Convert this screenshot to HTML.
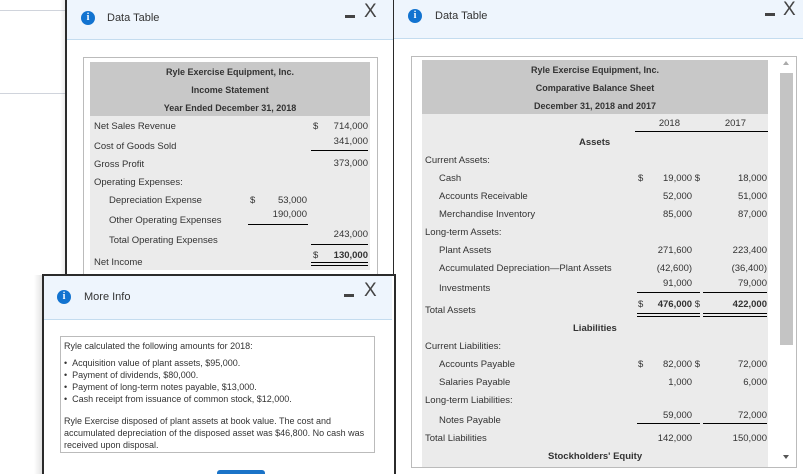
<!DOCTYPE html>
<html style="width:803px;height:474px;overflow:hidden"><head><meta charset="utf-8"><style>
*{margin:0;padding:0;box-sizing:border-box}
body{width:803px;height:474px;overflow:hidden;background:#fff;position:relative;font-family:"Liberation Sans",Arial,sans-serif;color:#333;font-size:9.5px}
.a{position:absolute;white-space:nowrap}
.r{text-align:right}
.b{font-weight:bold}
.ul{position:absolute;height:1px;background:#000}
.dl{position:absolute;height:4px;border-top:1px solid #000;border-bottom:1px solid #000}
.icon{position:absolute;width:14px;height:14px;border-radius:50%;background:#1273d0;color:#fff;font:bold 10px "Liberation Serif",serif;text-align:center;line-height:14px}
.hdr{position:absolute;background:#eef5fd;border-bottom:1px solid #c4dcef}
.ttl{position:absolute;font-size:11px;color:#333}
.min{position:absolute;width:10px;height:3px;background:#444}
.x{position:absolute;font-size:19px;color:#444;font-family:"Liberation Sans",sans-serif;line-height:1}
</style></head><body>
<div class="a" style="left:0;top:10px;width:70px;height:1px;background:#d0d4dc"></div>
<div class="a" style="left:0;top:93px;width:70px;height:1px;background:#d0d4dc"></div>

<!-- Window 1 -->
<div class="a" style="left:60px;top:0;width:8px;height:276px;background:linear-gradient(to right,rgba(0,0,0,0),rgba(0,0,0,0.12))"></div>
<div class="a" style="left:65px;top:-2px;width:330px;height:278px;background:#fff;border:2px solid #2b2b2b"></div>
<div class="hdr" style="left:67px;top:0;width:326px;height:40px"></div>
<div class="icon" style="left:81px;top:11px">i</div>
<div class="ttl" style="left:107px;top:12px">Data Table</div>
<div class="min" style="left:345px;top:15px"></div>
<div class="x" style="left:364px;top:2px">X</div>
<div class="a" style="left:83px;top:57px;width:295px;height:220px;border:1px solid #bbb"></div>
<div class="a" style="left:90px;top:62px;width:280px;height:54px;background:#c8c8c8"></div>
<div class="a" style="left:90px;top:116px;width:280px;height:154px;background:#ebebeb"></div>
<div class="a b" style="left:90px;width:280px;top:67px;text-align:center;font-size:9px">Ryle Exercise Equipment, Inc.</div>
<div class="a b" style="left:90px;width:280px;top:85px;text-align:center;font-size:9px">Income Statement</div>
<div class="a b" style="left:90px;width:280px;top:103px;text-align:center;font-size:9px">Year Ended December 31, 2018</div>
<div class="a" style="left:94px;top:121px">Net Sales Revenue</div>
<div class="a" style="left:94px;top:141px">Cost of Goods Sold</div>
<div class="a" style="left:94px;top:159px">Gross Profit</div>
<div class="a" style="left:94px;top:177px">Operating Expenses:</div>
<div class="a" style="left:109px;top:195px">Depreciation Expense</div>
<div class="a" style="left:109px;top:215px">Other Operating Expenses</div>
<div class="a" style="left:109px;top:235px">Total Operating Expenses</div>
<div class="a" style="left:94px;top:257px">Net Income</div>
<div class="a" style="left:313px;top:121px">$</div>
<div class="a r" style="left:310px;width:58px;top:121px">714,000</div>
<div class="a r" style="left:310px;width:58px;top:136px">341,000</div>
<div class="ul" style="left:311px;width:57px;top:150px"></div>
<div class="a r" style="left:310px;width:58px;top:158px">373,000</div>
<div class="a" style="left:250px;top:195px">$</div>
<div class="a r" style="left:250px;width:57px;top:195px">53,000</div>
<div class="a r" style="left:250px;width:57px;top:209px">190,000</div>
<div class="ul" style="left:248px;width:60px;top:224px"></div>
<div class="a r" style="left:310px;width:58px;top:229px">243,000</div>
<div class="ul" style="left:311px;width:57px;top:244px"></div>
<div class="a" style="left:313px;top:250px">$</div>
<div class="a r b" style="left:310px;width:58px;top:250px">130,000</div>
<div class="dl" style="left:311px;width:57px;top:262px"></div>

<!-- Window 2 -->
<div class="a" style="left:392px;top:0;width:8px;height:474px;background:linear-gradient(to right,rgba(0,0,0,0),rgba(0,0,0,0.1))"></div>
<div class="a" style="left:394px;top:0;width:409px;height:474px;background:#fff"></div>
<div class="hdr" style="left:394px;top:0;width:409px;height:39px"></div>
<div class="icon" style="left:408px;top:9px">i</div>
<div class="ttl" style="left:435px;top:10px">Data Table</div>
<div class="min" style="left:765px;top:13px"></div>
<div class="x" style="left:783px;top:0">X</div>
<div class="a" style="left:411px;top:56px;width:386px;height:412px;border:1px solid #bbb"></div>
<div class="a" style="left:422px;top:60px;width:346px;height:54px;background:#c8c8c8"></div>
<div class="a" style="left:422px;top:114px;width:346px;height:353px;background:#ebebeb"></div>
<div class="a" style="left:780px;top:73px;width:13px;height:272px;background:#c4c4c4"></div>
<div class="a" style="left:783px;top:61px;width:0;height:0;border-left:3.5px solid transparent;border-right:3.5px solid transparent;border-bottom:4px solid #aaa"></div>
<div class="a" style="left:783px;top:455px;width:0;height:0;border-left:3.5px solid transparent;border-right:3.5px solid transparent;border-top:4px solid #555"></div>
<div class="a b" style="left:422px;width:346px;top:65px;text-align:center;font-size:9px">Ryle Exercise Equipment, Inc.</div>
<div class="a b" style="left:422px;width:346px;top:83px;text-align:center;font-size:9px">Comparative Balance Sheet</div>
<div class="a b" style="left:422px;width:346px;top:101px;text-align:center;font-size:9px">December 31, 2018 and 2017</div>
<div class="a r" style="left:640px;width:40px;top:118px">2018</div>
<div class="a r" style="left:706px;width:40px;top:118px">2017</div>
<div class="ul" style="left:635px;width:133px;top:131px"></div>
<div class="a b" style="left:579px;top:137px">Assets</div>
<div class="a" style="left:425px;top:155px">Current Assets:</div>
<div class="a" style="left:439px;top:173px">Cash</div>
<div class="a" style="left:439px;top:191px">Accounts Receivable</div>
<div class="a" style="left:439px;top:209px">Merchandise Inventory</div>
<div class="a" style="left:425px;top:227px">Long-term Assets:</div>
<div class="a" style="left:439px;top:245px">Plant Assets</div>
<div class="a" style="left:439px;top:263px">Accumulated Depreciation—Plant Assets</div>
<div class="a" style="left:439px;top:283px">Investments</div>
<div class="a" style="left:425px;top:305px">Total Assets</div>
<div class="a b" style="left:573px;top:323px">Liabilities</div>
<div class="a" style="left:425px;top:341px">Current Liabilities:</div>
<div class="a" style="left:439px;top:359px">Accounts Payable</div>
<div class="a" style="left:439px;top:377px">Salaries Payable</div>
<div class="a" style="left:425px;top:395px">Long-term Liabilities:</div>
<div class="a" style="left:439px;top:415px">Notes Payable</div>
<div class="a" style="left:425px;top:433px">Total Liabilities</div>
<div class="a b" style="left:548px;top:451px">Stockholders' Equity</div>
<div class="a" style="left:638px;top:173px">$</div>
<div class="a r" style="left:630px;width:70px;top:173px">19,000 $</div>
<div class="a r" style="left:700px;width:67px;top:173px">18,000</div>
<div class="a r" style="left:630px;width:70px;top:191px">52,000&nbsp;&nbsp;&nbsp;</div>
<div class="a r" style="left:700px;width:67px;top:191px">51,000</div>
<div class="a r" style="left:630px;width:70px;top:209px">85,000&nbsp;&nbsp;&nbsp;</div>
<div class="a r" style="left:700px;width:67px;top:209px">87,000</div>
<div class="a r" style="left:630px;width:70px;top:245px">271,600&nbsp;&nbsp;&nbsp;</div>
<div class="a r" style="left:700px;width:67px;top:245px">223,400</div>
<div class="a r" style="left:630px;width:70px;top:263px">(42,600)&nbsp;&nbsp;&nbsp;</div>
<div class="a r" style="left:700px;width:67px;top:263px">(36,400)</div>
<div class="a r" style="left:630px;width:70px;top:278px">91,000&nbsp;&nbsp;&nbsp;</div>
<div class="a r" style="left:700px;width:67px;top:278px">79,000</div>
<div class="ul" style="left:637px;width:63px;top:292px"></div>
<div class="ul" style="left:703px;width:64px;top:292px"></div>
<div class="a" style="left:638px;top:299px">$</div>
<div class="a r b" style="left:630px;width:70px;top:299px">476,000 <span style="font-weight:normal">$</span></div>
<div class="a r b" style="left:700px;width:67px;top:299px">422,000</div>
<div class="dl" style="left:637px;width:63px;top:313px"></div>
<div class="dl" style="left:703px;width:64px;top:313px"></div>
<div class="a" style="left:638px;top:359px">$</div>
<div class="a r" style="left:630px;width:70px;top:359px">82,000 $</div>
<div class="a r" style="left:700px;width:67px;top:359px">72,000</div>
<div class="a r" style="left:630px;width:70px;top:377px">1,000&nbsp;&nbsp;&nbsp;</div>
<div class="a r" style="left:700px;width:67px;top:377px">6,000</div>
<div class="a r" style="left:630px;width:70px;top:410px">59,000&nbsp;&nbsp;&nbsp;</div>
<div class="a r" style="left:700px;width:67px;top:410px">72,000</div>
<div class="ul" style="left:637px;width:63px;top:423px"></div>
<div class="ul" style="left:703px;width:64px;top:423px"></div>
<div class="a r" style="left:630px;width:70px;top:433px">142,000&nbsp;&nbsp;&nbsp;</div>
<div class="a r" style="left:700px;width:67px;top:433px">150,000</div>

<!-- Window 3 -->
<div class="a" style="left:34px;top:275px;width:9px;height:199px;background:linear-gradient(to right,rgba(0,0,0,0),rgba(0,0,0,0.12))"></div>
<div class="a" style="left:42px;top:274px;width:354px;height:200px;background:#fff;border:2px solid #2b2b2b;border-bottom:none"></div>
<div class="hdr" style="left:44px;top:276px;width:348px;height:44px"></div>
<div class="icon" style="left:57px;top:290px">i</div>
<div class="ttl" style="left:84px;top:291px">More Info</div>
<div class="min" style="left:344px;top:294px"></div>
<div class="x" style="left:364px;top:281px">X</div>
<div class="a" style="left:60px;top:336px;width:315px;height:117px;border:1px solid #bbb"></div>
<div class="a" style="left:64px;top:340px;font-size:9px;line-height:12px">Ryle calculated the following amounts for 2018:</div>
<div class="a" style="left:64px;top:357px;font-size:9px;line-height:12px">
• &nbsp;Acquisition value of plant assets, $95,000.<br>
• &nbsp;Payment of dividends, $80,000.<br>
• &nbsp;Payment of long-term notes payable, $13,000.<br>
• &nbsp;Cash receipt from issuance of common stock, $12,000.</div>
<div class="a" style="left:64px;top:415px;font-size:9px;line-height:12px;white-space:normal;width:310px">Ryle Exercise disposed of plant assets at book value. The cost and accumulated depreciation of the disposed asset was $46,800. No cash was received upon disposal.</div>
<div class="a" style="left:217px;top:470px;width:48px;height:4px;background:#1a73c8;border-radius:3px 3px 0 0"></div>
</body></html>
